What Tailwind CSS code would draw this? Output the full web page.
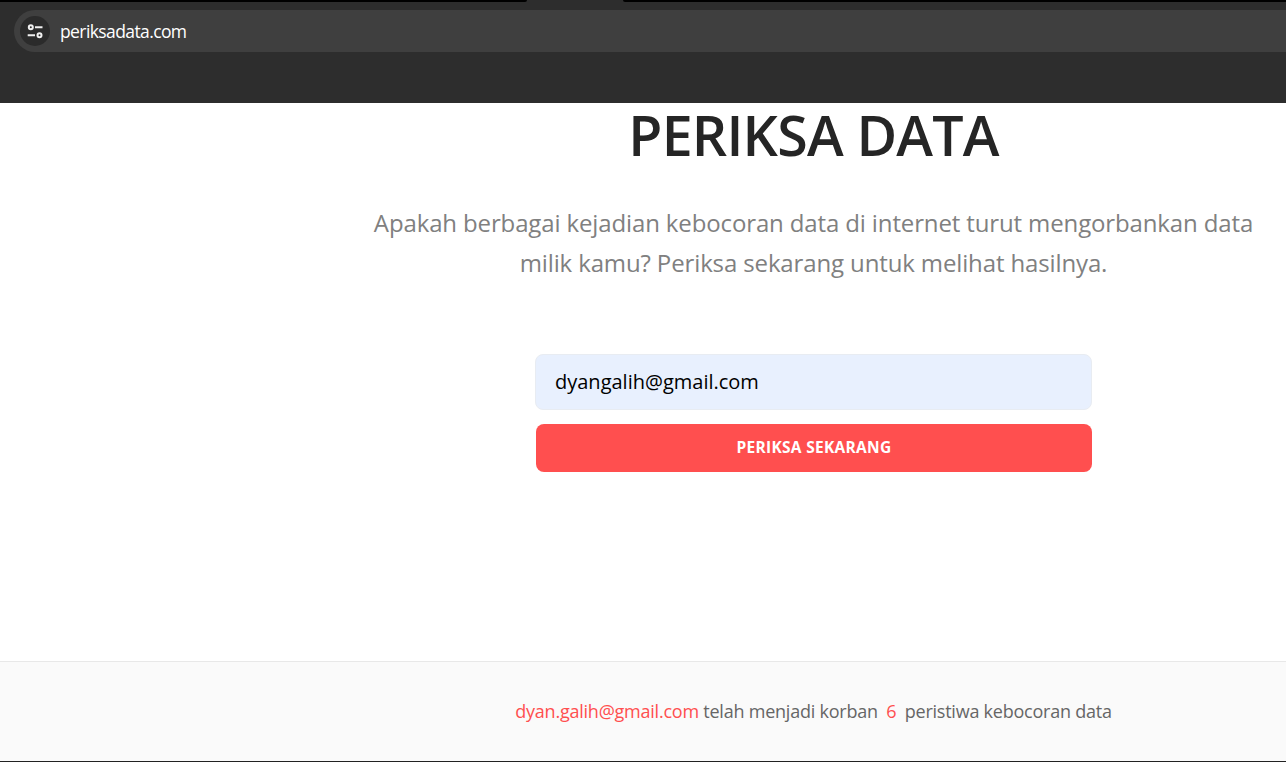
<!DOCTYPE html>
<html lang="id">
<head>
    <meta charset="UTF-8">
    <meta name="viewport" content="width=device-width, initial-scale=1.0">
    <title>Periksa Data</title>
    <script src="https://cdn.jsdelivr.net/npm/@tailwindcss/browser@4"></script>
</head>
<body class="h-[762px] overflow-hidden bg-white font-['Open_Sans',sans-serif] flex flex-col">
    <!-- Browser toolbar -->
    <header class="h-[103px] shrink-0 bg-[#2d2d2d]">
        <div class="flex h-0.5">
            <div class="w-[527px] bg-black rounded-br-lg"></div>
            <div class="w-[96px]"></div>
            <div class="grow bg-black rounded-bl-lg"></div>
        </div>
        <div class="mt-2 ml-[14px] flex h-[42px] items-center rounded-l-full bg-[#3f3f3f] pl-1.5">
            <div class="flex size-[30px] items-center justify-center rounded-full bg-[#2b2b2b]">
                <svg class="size-[18px]" viewBox="0 0 18 18" fill="none" stroke="#f0f0f0" stroke-width="2">
                    <circle cx="4.800" cy="5.300" r="2"/>
                    <path d="M9 5.300h7.500M1.700 13.200h7.300"/>
                    <circle cx="13.500" cy="13.200" r="2"/>
                </svg>
            </div>
            <span class="ml-[10px] pt-px text-[17.5px] tracking-[-0.6px] text-white">periksadata.com</span>
        </div>
    </header>

    <!-- Hero -->
    <main class="h-[558px] shrink-0 pl-[341px] text-center">
        <h1 class="text-[55.5px] leading-[64px] font-semibold tracking-[-0.8px] text-[#252525]">PERIKSA DATA</h1>
        <p class="mt-9 text-[24px] leading-10 tracking-[-0.13px] text-[#808080]">Apakah berbagai kejadian kebocoran data di internet turut mengorbankan data<br>milik kamu? Periksa sekarang untuk melihat hasilnya.</p>
        <form class="mx-auto mt-[71px] flex w-[557px] flex-col gap-[14px]">
            <input type="email" value="dyangalih@gmail.com" class="h-14 rounded-lg border border-[#e8ecf2] bg-[#e8f0fe] px-[19px] pb-0.5 text-[20px] text-black">
            <button type="button" class="ml-px h-12 rounded-lg bg-[#ff4f4f] text-[15.5px] font-bold tracking-[0.3px] text-white">PERIKSA SEKARANG</button>
        </form>
    </main>

    <!-- Result -->
    <footer class="grow border-t border-b border-t-[#e8e8e8] border-b-[#222] bg-[#fafafa] pt-[35px] pl-[341px] text-center text-[18px] leading-7 tracking-[-0.23px] text-[#666]">
        <span class="text-[#ff4f4f]">dyan.galih@gmail.com</span> telah menjadi korban <span class="mx-1 text-[#ff4f4f]">6</span> peristiwa kebocoran data
    </footer>
</body>
</html>
